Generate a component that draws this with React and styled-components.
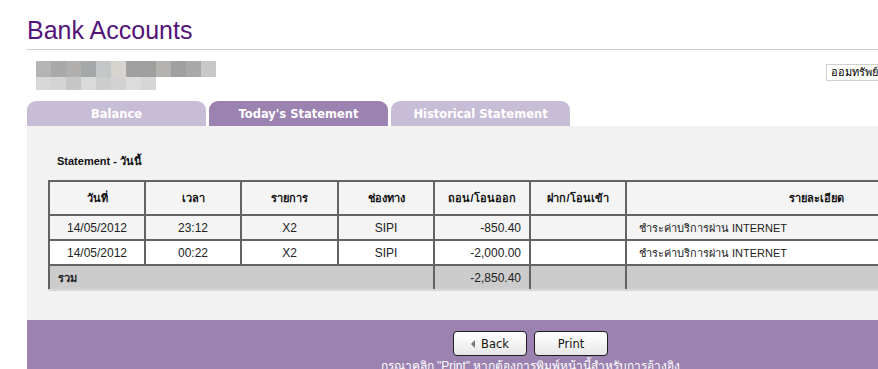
import React from 'react';
import styled, { createGlobalStyle } from 'styled-components';

const GlobalStyle = createGlobalStyle`
  body {
    margin: 0;
    background: #ffffff;
    font-family: 'Liberation Sans', Arial, sans-serif;
    overflow: hidden;
  }
`;

const Page = styled.div`
  width: 1010px;
  padding-left: 27px;
`;

const Title = styled.h1`
  margin: 0;
  padding-top: 15px;
  height: 34px;
  box-sizing: border-box;
  height: 49px;
  font-family: 'Liberation Sans', Arial, sans-serif;
  font-weight: normal;
  font-size: 25px;
  color: #54137a;
  line-height: 30px;
`;

const Rule = styled.div`
  height: 1px;
  background: #cccccc;
`;

const AccountRow = styled.div`
  display: flex;
  justify-content: space-between;
  align-items: flex-start;
  height: 51px;
  padding-top: 11px;
  box-sizing: border-box;
`;

const Blurred = styled.div`
  display: flex;
  flex-direction: column;
  margin-left: 9px;
`;

const PixelRow = styled.div`
  display: flex;
  height: ${(p) => p.$h}px;
`;

const Pixel = styled.span`
  width: 15px;
  background: ${(p) => p.$shade};
`;

const AccountSelect = styled.div`
  margin-right: 131px;
  margin-top: 3px;
  height: 17px;
  width: 80px;
  padding-left: 4px;
  border: 1px solid #d0d0d0;
  box-sizing: border-box;
  font-family: 'DejaVu Sans', Tahoma, sans-serif;
  font-size: 11px;
  line-height: 15px;
  color: #000;
  overflow: hidden;
  white-space: nowrap;
`;

const Tabs = styled.div`
  display: flex;
  gap: 3px;
  height: 25px;
`;

const Tab = styled.div`
  width: 179px;
  border-radius: 9px 9px 0 0;
  background: ${(p) => (p.$active ? '#9b82b0' : '#c8bdd6')};
  color: #ffffff;
  font-family: 'DejaVu Sans', Verdana, sans-serif;
  font-weight: bold;
  font-size: 11.5px;
  display: flex;
  align-items: center;
  justify-content: center;
  padding-top: 1px;
  box-sizing: border-box;
`;

const Panel = styled.div`
  background: #f2f2f2;
  height: 194px;
  padding: 26px 0 0 21px;
  box-sizing: border-box;
`;

const PanelHeading = styled.div`
  font-family: 'Liberation Sans', Tahoma, sans-serif;
  font-weight: bold;
  font-size: 11px;
  color: #111;
  margin-left: 9px;
  height: 28px;
`;

const Table = styled.table`
  border-collapse: collapse;
  width: 960px;
  font-size: 12px;
  color: #222;
  table-layout: fixed;
`;

const Th = styled.th`
  height: 34px;
  width: ${(p) => p.$w || 'auto'};
  border: 2px solid #636363;
  background: #f4f4f4;
  font-size: 11px;
  font-weight: bold;
  color: #111;
  text-align: center;
  padding: 0;
  box-sizing: border-box;
`;

const Row = styled.tr`
  background: ${(p) => (p.$alt ? '#ffffff' : '#f4f4f4')};
`;

const Td = styled.td`
  height: 25px;
  box-sizing: border-box;
  border: 2px solid #636363;
  padding: 0 8px;
  padding-left: ${(p) => (p.$align === 'left' ? '12px' : '8px')};
  text-align: ${(p) => p.$align || 'center'};
  font-size: ${(p) => (p.$small ? '11px' : '12px')};
  white-space: nowrap;
`;

const TotalRow = styled.tr`
  background: #cccccc;
`;

const TotalCell = styled.td`
  height: 25px;
  box-sizing: border-box;
  border: 2px solid #636363;
  border-bottom-color: #d8d8d8;
  padding: 0 8px;
  text-align: ${(p) => p.$align || 'left'};
  font-weight: ${(p) => (p.$bold ? 'bold' : 'normal')};
  font-size: ${(p) => (p.$bold ? '11px' : '12px')};
`;

const Footer = styled.div`
  background: #9b82b0;
  height: 60px;
  display: flex;
  flex-direction: column;
  align-items: center;
  padding-top: 11px;
  box-sizing: border-box;
  width: 1007px;
`;

const FooterInner = styled.div`
  width: 851px;
  display: flex;
  flex-direction: column;
  align-items: center;
`;

const Buttons = styled.div`
  display: flex;
  gap: 7px;
`;

const Button = styled.button`
  width: 74px;
  height: 25px;
  border: 1px solid #1e1e1e;
  border-radius: 4px;
  background: linear-gradient(#ffffff, #f4f4f4 50%, #e6e6e6);
  font-family: 'DejaVu Sans', Verdana, sans-serif;
  font-size: 11.5px;
  color: #111;
  display: flex;
  align-items: center;
  justify-content: center;
  gap: 6px;
  padding: 0;
`;

const Arrow = styled.span`
  width: 0;
  height: 0;
  border-top: 4px solid transparent;
  border-bottom: 4px solid transparent;
  border-right: 4px solid #777;
`;

const Note = styled.div`
  margin-top: 3px;
  font-size: 12px;
  line-height: 14px;
  color: #ffffff;
  white-space: nowrap;
`;

const topPixels = ['#b4b4b4', '#a9a9a9', '#b1b0ae', '#a5a8a8', '#c3c7c8', '#d7d3cf', '#a0a0a0', '#9f9f9f', '#b4b3b0', '#a0a0a0', '#a9a9a9', '#c8c8c8'];
const bottomPixels = ['#d8d8d8', '#d4d4d4', '#c6c6c6', '#dadada', '#cdcdcd', '#d2d2d2', '#dcdcdc', '#d6d6d6'];

const statement = [
  { date: '14/05/2012', time: '23:12', item: 'X2', channel: 'SIPI', out: '-850.40', detail: 'ชำระค่าบริการผ่าน INTERNET' },
  { date: '14/05/2012', time: '00:22', item: 'X2', channel: 'SIPI', out: '-2,000.00', detail: 'ชำระค่าบริการผ่าน INTERNET' },
];

const App = () => {
  return (
    <Page>
      <GlobalStyle />
      <Title>Bank Accounts</Title>
      <Rule />
      <AccountRow>
        <Blurred>
          <PixelRow $h={16}>
            {topPixels.map((c, i) => (
              <Pixel key={i} $shade={c} />
            ))}
          </PixelRow>
          <PixelRow $h={13}>
            {bottomPixels.map((c, i) => (
              <Pixel key={i} $shade={c} />
            ))}
          </PixelRow>
        </Blurred>
        <AccountSelect>ออมทรัพย์</AccountSelect>
      </AccountRow>

      <Tabs>
        <Tab>Balance</Tab>
        <Tab $active>Today's Statement</Tab>
        <Tab>Historical Statement</Tab>
      </Tabs>

      <Panel>
        <PanelHeading>Statement - วันนี้</PanelHeading>
        <Table>
          <thead>
            <tr>
              <Th $w='96px'>วันที่</Th>
              <Th $w='96px'>เวลา</Th>
              <Th $w='97px'>รายการ</Th>
              <Th $w='96px'>ช่องทาง</Th>
              <Th $w='96px'>ถอน/โอนออก</Th>
              <Th $w='96px'>ฝาก/โอนเข้า</Th>
              <Th>รายละเอียด</Th>
            </tr>
          </thead>
          <tbody>
            {statement.map((s, i) => (
              <Row key={i} $alt={i % 2 === 1}>
                <Td>{s.date}</Td>
                <Td>{s.time}</Td>
                <Td>{s.item}</Td>
                <Td>{s.channel}</Td>
                <Td $align='right'>{s.out}</Td>
                <Td></Td>
                <Td $align='left' $small>{s.detail}</Td>
              </Row>
            ))}
            <TotalRow>
              <TotalCell colSpan={4} $bold>รวม</TotalCell>
              <TotalCell $align='right'>-2,850.40</TotalCell>
              <TotalCell></TotalCell>
              <TotalCell></TotalCell>
            </TotalRow>
          </tbody>
        </Table>
      </Panel>

      <Footer>
        <FooterInner>
          <Buttons>
            <Button>
              <Arrow />
              Back
            </Button>
            <Button>Print</Button>
          </Buttons>
          <Note>กรุณาคลิก "Print" หากต้องการพิมพ์หน้านี้สำหรับการอ้างอิง</Note>
        </FooterInner>
      </Footer>
    </Page>
  );
};

export default App;
